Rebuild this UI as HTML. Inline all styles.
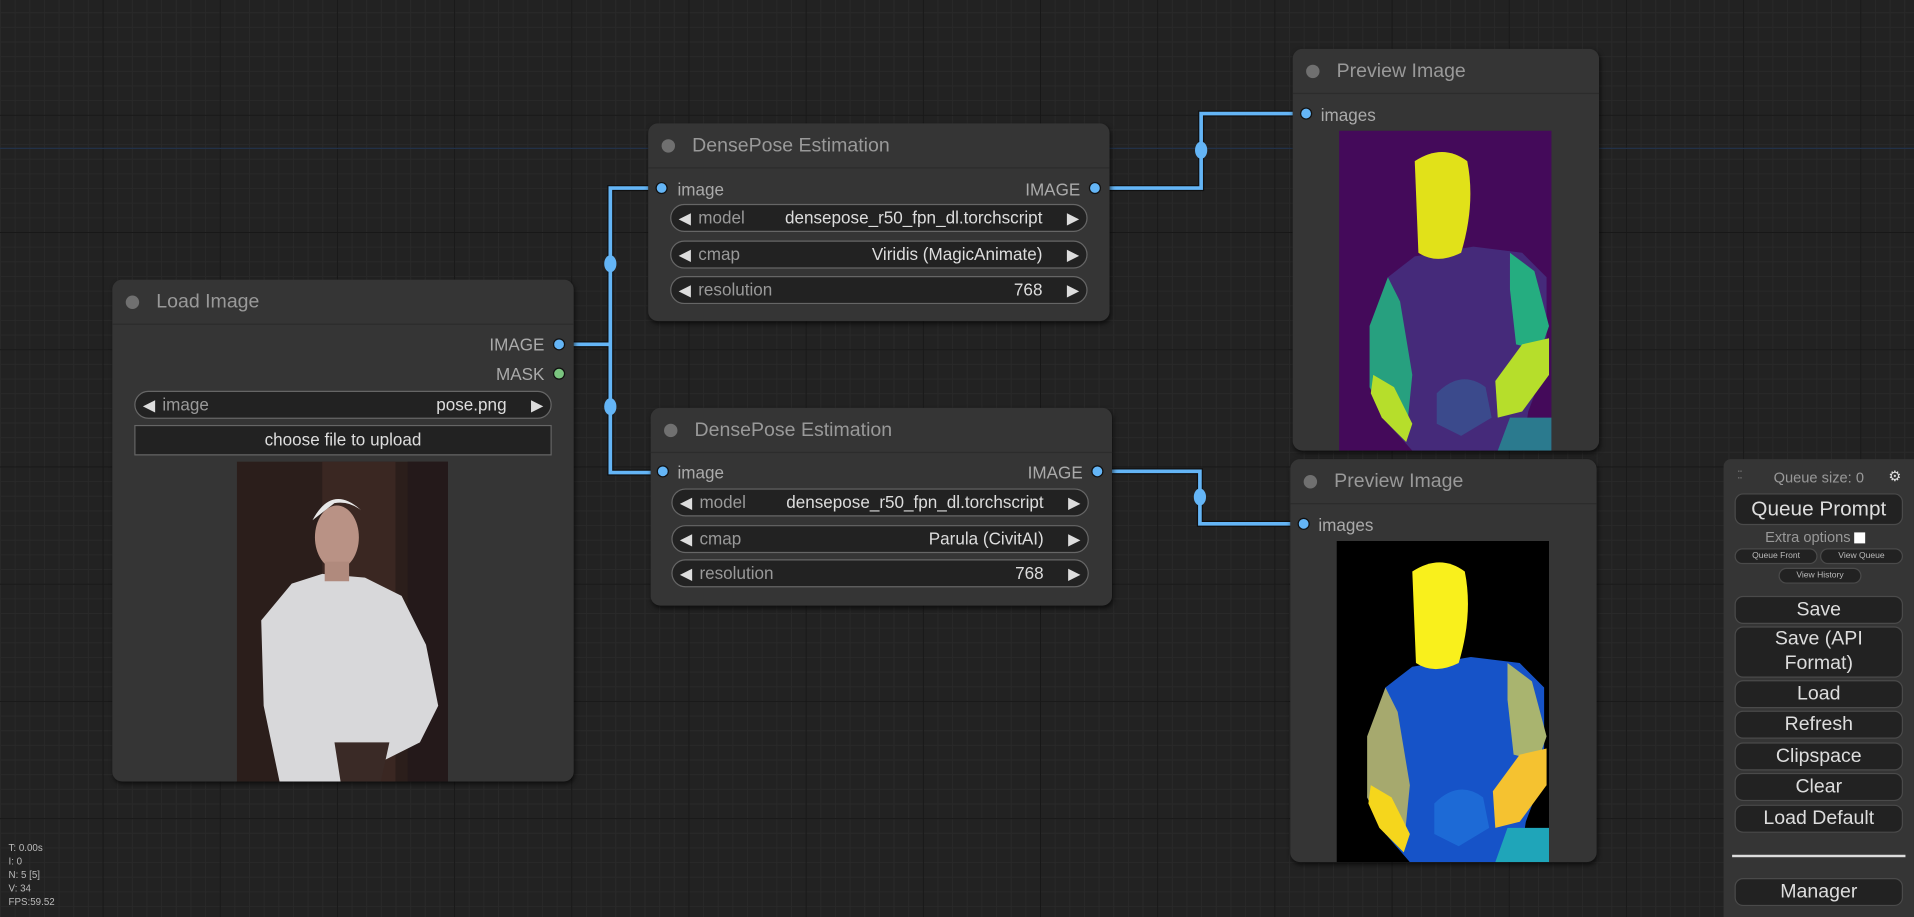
<!DOCTYPE html>
<html><head><meta charset="utf-8"><style>
html,body{margin:0;padding:0;width:1914px;height:917px;overflow:hidden;background:#222;}
#w{position:absolute;left:0;top:0;width:1568px;height:751px;transform:scale(1.22066,1.2211);transform-origin:0 0;font-family:"Liberation Sans",sans-serif;
background-color:#222;
background-image:linear-gradient(#181818 1px,transparent 1px),linear-gradient(90deg,#181818 1px,transparent 1px),linear-gradient(#292929 1px,transparent 1px),linear-gradient(90deg,#292929 1px,transparent 1px);
background-size:96px 96px,96px 96px,12px 12px,12px 12px;background-position:-12px -2px;}
.n{position:absolute;background:#353535;border-radius:8px;box-shadow:1px 2px 4px rgba(0,0,0,.6);}
.t{height:36px;border-bottom:1px solid #2c2c2c;color:#999;font-size:16px;line-height:37px;padding-left:36px;position:relative;}
.t:before{content:"";position:absolute;left:11px;top:13px;width:11px;height:11px;border-radius:50%;background:#707070;}
.a{position:absolute;font-size:14px;color:#aaa;}
.d{position:absolute;width:8px;height:8px;border-radius:50%;background:#64b5f6;border:1.5px solid #111;}
.wd{position:absolute;height:21px;border:1px solid #666;border-radius:12px;background:#222;font-size:14px;line-height:21px;color:#ddd;}
.wd .l{position:absolute;left:22px;color:#999}
.wd .v{position:absolute;right:36px}
.wd:before{content:"◀";position:absolute;left:6px;color:#ddd;font-size:13px}
.wd:after{content:"▶";position:absolute;right:6px;color:#ddd;font-size:13px}
.m{position:absolute;left:1412px;top:376px;width:156px;height:375px;background:#353535;border-radius:6px 0 0 0;}
.b{position:absolute;left:9px;width:136px;background:#222;border:1px solid #4a4a4a;border-radius:7px;color:#ddd;font-size:16px;text-align:center;line-height:21px;}
.s{position:absolute;height:11px;border:1px solid #4a4a4a;border-radius:7px;background:#222;color:#bbb;font-size:7px;line-height:11px;text-align:center}
</style></head><body><div id="w">
<div style="position:absolute;left:0;top:121px;width:1568px;height:1px;background:#22324a"></div>
<svg style="position:absolute;left:0;top:0" width="1568" height="751">
<g fill="none" stroke="#111" stroke-width="5"><path d="M462 282H500V154H540M500 282V387H540M901 154H984V93H1068M903 386H983V429H1066"/></g>
<g fill="none" stroke="#64b5f6" stroke-width="3"><path d="M462 282H500V154H540M500 282V387H540M901 154H984V93H1068M903 386H983V429H1066"/></g>
<g fill="#64b5f6"><ellipse cx="500" cy="216" rx="5" ry="7"/><ellipse cx="500" cy="333" rx="5" ry="7"/><ellipse cx="984" cy="123" rx="5" ry="7"/><ellipse cx="983" cy="407" rx="5" ry="7"/></g>
</svg>

<div class="n" style="left:92px;top:229px;width:378px;height:411px">
<div class="t">Load Image</div>
<div class="a" style="right:24px;top:45px">IMAGE</div><div class="d" style="left:361px;top:48px"></div>
<div class="a" style="right:24px;top:69px">MASK</div><div class="d" style="left:361px;top:72px;background:#7ac47f"></div>
<div class="wd" style="left:18px;top:91px;width:340px"><span class="l">image</span><span class="v">pose.png</span></div>
<div style="position:absolute;left:18px;top:119px;width:340px;height:23px;background:#222;border:1px solid #666;color:#ddd;font-size:14px;text-align:center;line-height:23px">choose file to upload</div>
<svg style="position:absolute;left:102px;top:149px" width="173" height="262" viewBox="0 0 173 262">
<rect width="173" height="262" fill="#2b1e1b"/><rect x="70" width="60" height="262" fill="#3a2722"/><rect x="140" width="33" height="262" fill="#24191a"/>
<path d="M35 262L22 200 20 130 45 100 70 92 105 95 135 110 155 150 165 200 150 230 120 245 100 262Z" fill="#d8d8da"/>
<path d="M80 230H125L118 262H85Z" fill="#3a2a26"/>
<ellipse cx="82" cy="62" rx="18" ry="26" fill="#b99285"/><path d="M62 48Q78 18 102 40Q92 32 80 34Z" fill="#e8e8e8"/>
<rect x="72" y="82" width="20" height="16" fill="#b08a7d"/>
</svg>
</div>

<div class="n" style="left:531px;top:101px;width:378px;height:162px">
<div class="t">DensePose Estimation</div>
<div class="a" style="left:24px;top:46px">image</div><div class="d" style="left:6px;top:48px"></div>
<div class="a" style="right:24px;top:46px">IMAGE</div><div class="d" style="left:361px;top:48px"></div>
<div class="wd" style="left:18px;top:66px;width:340px"><span class="l">model</span><span class="v">densepose_r50_fpn_dl.torchscript</span></div>
<div class="wd" style="left:18px;top:96px;width:340px"><span class="l">cmap</span><span class="v">Viridis (MagicAnimate)</span></div>
<div class="wd" style="left:18px;top:125px;width:340px"><span class="l">resolution</span><span class="v">768</span></div>
</div>

<div class="n" style="left:533px;top:334px;width:378px;height:162px">
<div class="t">DensePose Estimation</div>
<div class="a" style="left:22px;top:45px">image</div><div class="d" style="left:5px;top:47px"></div>
<div class="a" style="right:24px;top:45px">IMAGE</div><div class="d" style="left:361px;top:47px"></div>
<div class="wd" style="left:17px;top:66px;width:340px"><span class="l">model</span><span class="v">densepose_r50_fpn_dl.torchscript</span></div>
<div class="wd" style="left:17px;top:96px;width:340px"><span class="l">cmap</span><span class="v">Parula (CivitAI)</span></div>
<div class="wd" style="left:17px;top:124px;width:340px"><span class="l">resolution</span><span class="v">768</span></div>
</div>

<div class="n" style="left:1059px;top:40px;width:251px;height:329px">
<div class="t">Preview Image</div>
<div class="a" style="left:23px;top:46px">images</div><div class="d" style="left:6px;top:48px"></div>
<svg style="position:absolute;left:38px;top:67px" width="174" height="262" viewBox="0 0 174 262">
<rect width="174" height="262" fill="#440a5a"/>
<path d="M62 103L40 120 30 150 25 210 40 240 60 262H150L155 230 170 190 170 120 150 100 110 95Z" fill="#452a7a"/>
<path d="M40 120L25 160 25 210 40 240 55 250 60 200 50 140Z" fill="#27a07f"/>
<path d="M140 100L160 115 172 160 165 180 145 175 140 130Z" fill="#25ad80"/>
<path d="M150 175L172 170 172 200 150 230 130 235 128 205Z" fill="#b6de2b"/>
<path d="M28 200L45 210 60 240 55 255 35 235 26 215Z" fill="#b6de2b"/>
<path d="M80 215Q100 195 120 210L125 235 100 250 80 240Z" fill="#3b4a8c"/>
<path d="M140 235H174V262H130Z" fill="#2b7a8e"/>
<path d="M62 25Q85 10 105 25 112 60 100 100 80 110 65 100 55 60Z" fill="#e1e119"/>
</svg>
</div>

<div class="n" style="left:1057px;top:376px;width:251px;height:330px">
<div class="t">Preview Image</div>
<div class="a" style="left:23px;top:46px">images</div><div class="d" style="left:6px;top:48px"></div>
<svg style="position:absolute;left:38px;top:67px" width="174" height="263" viewBox="0 0 174 263">
<rect width="174" height="263" fill="#000"/>
<path d="M62 103L40 120 30 150 25 210 40 240 60 263H150L155 230 170 190 170 120 150 100 110 95Z" fill="#1653c8"/>
<path d="M40 120L25 160 25 210 40 240 55 250 60 200 50 140Z" fill="#a6a96e"/>
<path d="M140 100L160 115 172 160 165 180 145 175 140 130Z" fill="#a9b46f"/>
<path d="M150 175L172 170 172 200 150 230 130 235 128 205Z" fill="#f5c230"/>
<path d="M28 200L45 210 60 240 55 255 35 235 26 215Z" fill="#f5d61c"/>
<path d="M80 215Q100 195 120 210L125 235 100 250 80 240Z" fill="#1d6ad6"/>
<path d="M140 235H174V263H130Z" fill="#1fa5b9"/>
<path d="M62 25Q85 10 105 25 112 60 100 100 80 110 65 100 55 60Z" fill="#f9f01c"/>
</svg>
</div>

<div class="m">
<div style="position:absolute;left:11px;top:8px;color:#777;font-size:9px;letter-spacing:-1px">⁚⁚</div>
<div style="position:absolute;left:0;width:156px;top:8px;text-align:center;color:#999;font-size:12px">Queue size: 0</div>
<div style="position:absolute;left:135px;top:7px;color:#ddd;font-size:12px">⚙</div>
<div class="b" style="top:28px;font-size:17px;line-height:24px">Queue Prompt</div>
<div style="position:absolute;left:34px;top:57px;color:#999;font-size:12px">Extra options <span style="display:inline-block;width:9px;height:9px;background:#fff;vertical-align:-1px"></span></div>
<div class="s" style="left:9px;top:73px;width:66px">Queue Front</div>
<div class="s" style="left:79px;top:73px;width:66px">View Queue</div>
<div class="s" style="left:45px;top:89px;width:66px">View History</div>
<div class="b" style="top:112px">Save</div>
<div class="b" style="top:137px;line-height:20px">Save (API<br>Format)</div>
<div class="b" style="top:181px">Load</div>
<div class="b" style="top:206px">Refresh</div>
<div class="b" style="top:232px">Clipspace</div>
<div class="b" style="top:257px">Clear</div>
<div class="b" style="top:283px">Load Default</div>
<div style="position:absolute;left:7px;top:324px;width:142px;height:2px;background:#ddd"></div>
<div class="b" style="top:343px">Manager</div>
</div>

<div style="position:absolute;left:7px;top:689px;color:#bbb;font-size:8px;line-height:11px">T: 0.00s<br>I: 0<br>N: 5 [5]<br>V: 34<br>FPS:59.52</div>
</div></body></html>
